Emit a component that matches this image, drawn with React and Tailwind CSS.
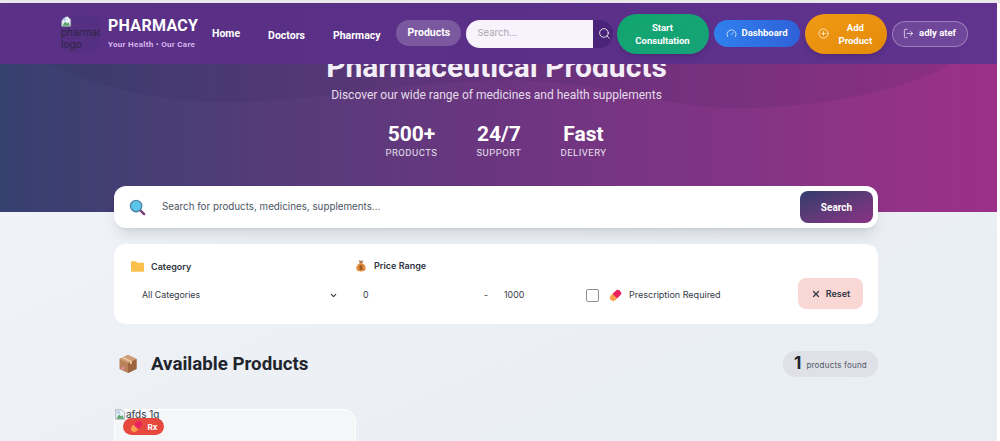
import React from 'react';
import { Search, Gauge, CirclePlus, LogOut, X, ChevronDown } from 'lucide-react';

const BrokenImage = ({ className }) => (
    <svg viewBox="0 0 16 16" className={className}>
        <path d="M1 1h9l4 4v10H1z" fill="#e8eef5" stroke="#9aa3ad" strokeWidth="1" />
        <path d="M2 14l4-6 3 3 2-2 2 5z" fill="#5aa469" />
        <circle cx="5" cy="5" r="2" fill="#a8c8f0" />
    </svg>
);

const FolderIcon = () => (
    <svg viewBox="0 0 16 14" className="w-[13px] h-[12px]">
        <path d="M0 2a1 1 0 011-1h5l2 2h7a1 1 0 011 1v9a1 1 0 01-1 1H1a1 1 0 01-1-1z" fill="#fcc14d" />
    </svg>
);

const MoneyBagIcon = () => (
    <svg viewBox="0 0 16 16" className="w-[12px] h-[13px]">
        <path d="M5 1l3 1 3-1-1.5 4h-3z" fill="#a9703a" />
        <path d="M6 5h4c3 2 5 5 4 8-.5 2-3 3-6 3s-5.500-1-6-3c-1-3 1-6 4-8z" fill="#e08a3c" />
        <path d="M8 7v7M10 9H7a1 1 0 000 2h2a1 1 0 010 2H6" fill="none" stroke="#7a4a1c" strokeWidth="1" />
    </svg>
);

const PillIcon = () => (
    <svg viewBox="0 0 16 16" className="w-[13px] h-[13px]">
        <g transform="rotate(-45 8 8)">
            <rect x="0" y="4" width="10" height="8" rx="4" fill="#f9a04e" />
            <rect x="7" y="4" width="9" height="8" rx="4" fill="#e9245e" />
            <rect x="7" y="4" width="3" height="8" fill="#e9245e" />
        </g>
    </svg>
);

const MagnifierIcon = () => (
    <svg viewBox="0 0 18 18" className="w-[17px] h-[17px]">
        <path d="M11.500 11.500l4.500 4.500" stroke="#7b3f7d" strokeWidth="2.600" strokeLinecap="round" />
        <circle cx="7.500" cy="7.500" r="6" fill="#5cc4e8" stroke="#4f86a8" strokeWidth="1.400" />
    </svg>
);

const BoxIcon = () => (
    <svg viewBox="0 0 20 20" className="w-[20px] h-[20px]">
        <path d="M10 1l8.500 4v10L10 19l-8.500-4V5z" fill="#b9815a" />
        <path d="M10 9l8.500-4v10L10 19z" fill="#9c6540" />
        <path d="M10 1l8.500 4L10 9 1.500 5z" fill="#d09c74" />
        <path d="M5.500 3l8.500 4v2.500l-2 1V8L3.500 4z" fill="#e7c4a4" />
        <rect x="3.500" y="13" width="3" height="2.500" fill="#e58aa0" />
    </svg>
);

const NavLink = ({ children, active }) => (
    <a className={`text-[10.500px] font-bold text-white ${active ? 'bg-white/20 rounded-full px-3 h-[26px] flex items-center -mt-px' : ''}`}>
        {children}
    </a>
);

const Stat = ({ value, label }) => (
    <div>
        <div className="text-[21px] leading-[23px] font-bold">{value}</div>
        <div className="text-[9.500px] leading-[14px] tracking-[0.5px] text-[#e8e0ee]">{label}</div>
    </div>
);

export default function App() {
    return (
        <div className="h-[441px] w-[1000px] overflow-hidden bg-white font-['Roboto',sans-serif]">
            <div className="h-[3px] bg-[#e9e9ec]" />
            <div className="w-[997px] h-[438px] overflow-hidden bg-gradient-to-br from-[#f2f5f8] via-[#edf0f5] to-[#e8eef2]">
                {/* navbar */}
                <nav className="h-[61px] bg-gradient-to-r from-[#5a3186] via-[#5a2f88] to-[#60338f] flex items-center pl-[60px]">
                    <div className="relative w-[40px] h-[38px] rounded-xl bg-[#553082] shrink-0 overflow-hidden">
                        <BrokenImage className="absolute left-px top-px w-[11px] h-[11px]" />
                        <span className="block pt-[11px] pl-px text-[10px] leading-[12px] text-[#2d2342] font-['Inter',sans-serif]">pharmac logo</span>
                    </div>
                    <div className="ml-[8px] w-[104px] shrink-0">
                        <div className="text-[16px] leading-[20px] font-bold text-white tracking-[0.3px]">PHARMACY</div>
                        <div className="text-[8px] leading-[12px] font-bold text-[#d8b6f0] mt-[3px] tracking-[0.3px]">Your Health • Our Care</div>
                    </div>
                    <div className="flex items-center shrink-0">
                        <NavLink>Home</NavLink>
                        <div className="ml-[28px]"><NavLink>Doctors</NavLink></div>
                        <div className="ml-[28px]"><NavLink>Pharmacy</NavLink></div>
                        <div className="ml-[15px] w-[65px]"><NavLink active>Products</NavLink></div>
                    </div>
                    <div className="ml-[5px] flex items-center shrink-0">
                        <div className="w-[127px] h-[28px] rounded-l-full bg-[#f7f2fb] pl-3 flex items-center text-[9.500px] text-[#a8a8b0] font-['Inter',sans-serif]">Search...</div>
                        <div className="w-[20px] h-[28px] rounded-r-full bg-[#4a2478] flex items-center justify-center">
                            <Search className="w-[13px] h-[13px] text-white ml-1" strokeWidth={1.500} />
                        </div>
                    </div>
                    <button className="ml-[4px] w-[92px] h-[40px] rounded-full bg-gradient-to-br from-[#10a66f] to-[#17a277] text-white text-[9.500px] font-bold leading-[13px] shadow-md shrink-0">Start<br />Consultation</button>
                    <button className="ml-[5px] w-[86px] h-[27px] rounded-full bg-gradient-to-r from-[#2f80ed] to-[#2f62d8] text-white text-[9.500px] font-bold flex items-center justify-center gap-[5px] shrink-0">
                        <Gauge className="w-[11px] h-[11px]" strokeWidth={1.500} />
                        Dashboard
                    </button>
                    <button className="ml-[5px] w-[82px] h-[40px] rounded-full bg-gradient-to-br from-[#f09a14] to-[#e58a0a] text-white text-[9.500px] font-bold leading-[13px] flex items-center pl-[13px] gap-[10px] shadow-md shrink-0">
                        <CirclePlus className="w-[11px] h-[11px]" strokeWidth={1.500} />
                        <span className="text-center">Add<br />Product</span>
                    </button>
                    <button className="ml-[5px] w-[76px] h-[26px] rounded-full border border-white/30 bg-white/10 text-white text-[9.500px] font-bold flex items-center justify-center gap-[5px] shrink-0">
                        <LogOut className="w-[11px] h-[11px]" strokeWidth={1.500} />
                        adly atef
                    </button>
                </nav>

                {/* hero */}
                <section className="relative h-[148px] overflow-hidden bg-gradient-to-r from-[#35406f] via-[#6b3580] to-[#9c3088]">
                    <svg viewBox="0 0 997 148" preserveAspectRatio="none" className="absolute inset-0 w-full h-full">
                        <path d="M0 0h950c-40 25-130 44-210 44-70 0-120-20-190-26-120-8-220 20-320 20C150 38 90 20 50 0z" fill="#2a1d50" fillOpacity="0.1" />
                    </svg>
                    <div className="relative -mt-[14px] text-center pr-[4px]">
                        <h1 className="text-[30px] leading-[34px] font-bold text-[#f3eef7]">Pharmaceutical Products</h1>
                        <p className="mt-[3px] text-[12px] leading-[16px] text-[#e4dcea]">Discover our wide range of medicines and health supplements</p>
                    </div>
                    <div className="relative flex justify-center gap-[39px] mt-[20px] pr-[5px] text-white text-center">
                        <Stat value="500+" label="PRODUCTS" />
                        <Stat value="24/7" label="SUPPORT" />
                        <Stat value="Fast" label="DELIVERY" />
                    </div>
                </section>

                {/* content */}
                <div className="relative w-[764px] ml-[114px] -mt-[26px] font-['Inter',sans-serif]">
                    <div className="h-[42px] bg-white rounded-xl shadow-lg flex items-center pl-[15px] pr-[5px]">
                        <MagnifierIcon />
                        <span className="ml-[16px] text-[9.800px] text-[#4b5563] flex-1">Search for products, medicines, supplements...</span>
                        <button className="w-[73px] h-[32px] rounded-lg bg-gradient-to-br from-[#2f3b6c] to-[#8b2f85] text-white text-[10px] font-bold font-['Roboto',sans-serif]">Search</button>
                    </div>

                    <div className="mt-[16px] h-[80px] bg-white rounded-xl flex items-end pl-[17px] pr-[15px] pb-[21px]">
                        <div className="w-[224px] pr-[17px]">
                            <div className="flex items-center gap-[7px] text-[9px] font-semibold text-[#2f3542] mb-[14px]">
                                <FolderIcon />
                                Category
                            </div>
                            <div className="flex items-center justify-between pl-[11px] text-[8.800px] text-[#343a46] h-[16px]">
                                All Categories
                                <ChevronDown className="w-[9px] h-[9px]" strokeWidth={3} />
                            </div>
                        </div>
                        <div className="w-[231px]">
                            <div className="flex items-center gap-[7px] text-[9px] font-semibold text-[#2f3542] mb-[15px]">
                                <MoneyBagIcon />
                                Price Range
                            </div>
                            <div className="flex items-center text-[8.800px] text-[#343a46] h-[16px] pl-[8px]">
                                <span className="w-[121px]">0</span>
                                <span className="w-[20px]">-</span>
                                <span>1000</span>
                            </div>
                        </div>
                        <div className="flex items-center gap-[10px] text-[9px] text-[#343a46] h-[16px] flex-1">
                            <span className="w-[13px] h-[13px] rounded-[2px] border border-[#8b8f96]" />
                            <PillIcon />
                            <span className="-ml-[3px]">Prescription Required</span>
                        </div>
                        <button className="w-[65px] h-[31px] -mb-[6px] rounded-lg bg-[#f8d7d5] text-[#2f3542] text-[9px] font-semibold flex items-center justify-center gap-[5px]">
                            <X className="w-[10px] h-[10px]" strokeWidth={3} />
                            Reset
                        </button>
                    </div>

                    <div className="mt-[27px] flex items-center justify-between">
                        <div className="flex items-center gap-[13px] ml-[4px]">
                            <BoxIcon />
                            <h2 className="text-[18.700px] font-bold leading-[26px] text-[#20242c] font-['Roboto',sans-serif]">Available Products</h2>
                        </div>
                        <div className="h-[26px] w-[95px] rounded-full bg-[#dfe1e7] flex items-center justify-center gap-[5px]">
                            <span className="text-[17px] font-bold text-[#20242c]">1</span>
                            <span className="text-[8px] text-[#4b5563] tracking-[0.2px] mt-[2px]">products found</span>
                        </div>
                    </div>

                    <div className="relative mt-[32px] w-[242px] h-[40px] rounded-t-xl border border-white bg-[#f4f6f8]">
                        <div className="flex items-center -mt-[2px]">
                            <BrokenImage className="w-[11px] h-[11px]" />
                            <span className="text-[10px] leading-[12px] text-[#343a46]">afds 1g</span>
                        </div>
                        <div className="absolute left-[8px] top-[8px] w-[41px] h-[17px] rounded-full bg-[#e8493f] flex items-center justify-center gap-[5px] text-[8px] font-bold text-white">
                            <PillIcon />
                            Rx
                        </div>
                    </div>
                </div>
            </div>
        </div>
    );
}
